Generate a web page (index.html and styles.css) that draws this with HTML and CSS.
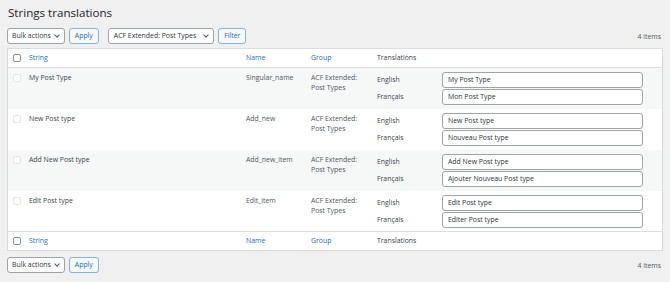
FILE: index.html
```html
<!DOCTYPE html>
<html lang="en">
<head>
    <meta charset="UTF-8">
    <title>Strings translations</title>
    <link rel="stylesheet" href="styles.css">
</head>
<body>
    <div class="wrap">
        <h1>Strings translations</h1>

        <div class="tablenav">
            <div class="actions">
                <span class="select">Bulk actions</span>
                <span class="button">Apply</span>
            </div>
            <div class="actions">
                <span class="select group">ACF Extended: Post Types</span>
                <span class="button">Filter</span>
            </div>
            <span class="count">4 items</span>
        </div>

        <div class="list-table">
            <div class="row head">
                <span class="cb"><i class="box"></i></span>
                <span class="link">String</span>
                <span class="link">Name</span>
                <span class="link">Group</span>
                <span>Translations</span>
            </div>

            <div class="row alt">
                <span class="cb"><i class="box light"></i></span>
                <span class="str">My Post Type</span>
                <span>Singular_name</span>
                <span>ACF Extended:<br>Post Types</span>
                <div class="trans">
                    <span>English</span><span class="input">My Post Type</span>
                    <span>Français</span><span class="input">Mon Post Type</span>
                </div>
            </div>

            <div class="row">
                <span class="cb"><i class="box light"></i></span>
                <span class="str">New Post type</span>
                <span>Add_new</span>
                <span>ACF Extended:<br>Post Types</span>
                <div class="trans">
                    <span>English</span><span class="input">New Post type</span>
                    <span>Français</span><span class="input">Nouveau Post type</span>
                </div>
            </div>

            <div class="row alt">
                <span class="cb"><i class="box light"></i></span>
                <span class="str">Add New Post type</span>
                <span>Add_new_item</span>
                <span>ACF Extended:<br>Post Types</span>
                <div class="trans">
                    <span>English</span><span class="input">Add New Post type</span>
                    <span>Français</span><span class="input">Ajouter Nouveau Post type</span>
                </div>
            </div>

            <div class="row last">
                <span class="cb"><i class="box light"></i></span>
                <span class="str">Edit Post type</span>
                <span>Edit_item</span>
                <span>ACF Extended:<br>Post Types</span>
                <div class="trans">
                    <span>English</span><span class="input">Edit Post type</span>
                    <span>Français</span><span class="input">Editer Post type</span>
                </div>
            </div>

            <div class="row head foot">
                <span class="cb"><i class="box"></i></span>
                <span class="link">String</span>
                <span class="link">Name</span>
                <span class="link">Group</span>
                <span>Translations</span>
            </div>
        </div>

        <div class="tablenav bottom">
            <div class="actions">
                <span class="select">Bulk actions</span>
                <span class="button">Apply</span>
            </div>
            <span class="count">4 items</span>
        </div>
    </div>
</body>
</html>
```

FILE: styles.css
```css
/* Admin page */
body {
    margin: 0;
    background: #f0f0f1;
    color: #3c434a;
    font-family: "Open Sans", "Noto Sans", sans-serif;
    font-size: 6.9px;
}

.wrap {
    padding: 0 8px 0 7px;
}

h1 {
    margin: 0;
    padding: 5px 0 0 1px;
    height: 23px;
    box-sizing: border-box;
    font-size: 11.6px;
    font-weight: 400;
    line-height: 15px;
    color: #1d2327;
}

/* Toolbar */
.tablenav {
    display: flex;
    align-items: center;
    gap: 9px;
    height: 16px;
    margin: 5px 0 4px;
    white-space: nowrap;
}

.tablenav.bottom {
    margin-top: 6px;
}

.actions {
    display: flex;
    gap: 4px;
}

.select {
    position: relative;
    height: 16px;
    box-sizing: border-box;
    padding: 0 13px 0 4px;
    border: 1px solid #a0a3a8;
    border-radius: 3px;
    background: #fff;
    color: #2c3338;
    line-height: 14px;
}

.select::after {
    content: "";
    position: absolute;
    right: 5px;
    top: 4px;
    width: 3px;
    height: 3px;
    border-right: 1px solid #50575e;
    border-bottom: 1px solid #50575e;
    transform: rotate(45deg);
}

.group {
    padding-left: 5px;
    padding-right: 17px;
}

.button {
    height: 16px;
    box-sizing: border-box;
    padding: 0 5px;
    border: 1px solid #8cb0d3;
    border-radius: 3px;
    background: #f6f7f7;
    color: #2271b1;
    line-height: 14px;
}

.count {
    margin-left: auto;
    color: #50575e;
    padding-right: 1px;
}

/* Table */
.list-table {
    background: #fff;
    border: 1px solid #dcdcde;
    width: 654px;
}

.row {
    display: grid;
    grid-template-columns: 21px 217px 65px 66px 1fr;
    height: 41px;
    box-sizing: border-box;
    padding-top: 5px;
    line-height: 10px;
    color: #50575e;
}

.row.last {
    height: 40px;
}

.row.alt {
    background: #f6f7f7;
}

.row.head {
    height: 19px;
    padding-top: 4px;
    border-bottom: 1px solid #dcdcde;
    color: #3c434a;
}

.row.foot {
    border-bottom: 0;
    border-top: 1px solid #dcdcde;
}

.link {
    color: #2271b1;
}

.str {
    color: #3c434a;
}

.cb {
    padding-left: 5px;
    padding-top: 1px;
}

.box {
    display: block;
    width: 8px;
    height: 8px;
    box-sizing: border-box;
    border: 1px solid #8c8f94;
    border-radius: 2px;
    background: #fff;
}

.box.light {
    border-color: #e4e5e7;
}

.trans {
    display: grid;
    grid-template-columns: 65px 201px;
    grid-auto-rows: 16px;
    align-content: start;
    row-gap: 1px;
    align-items: center;
    margin-top: -1px;
    color: #3c434a;
}

.input {
    height: 16px;
    box-sizing: border-box;
    padding: 0 5px;
    border: 1px solid #a0a3a8;
    border-radius: 3px;
    background: #fff;
    color: #2c3338;
    line-height: 14px;
}
```
